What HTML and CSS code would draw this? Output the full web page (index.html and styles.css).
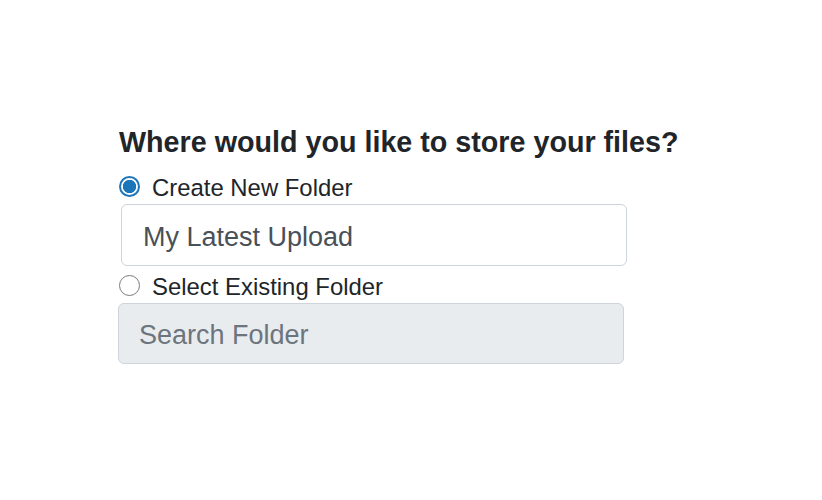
FILE: index.html
```html
<!DOCTYPE html>
<html lang="en">
<head>
<meta charset="utf-8">
<title>Store files</title>
<link rel="stylesheet" href="styles.css">
</head>
<body>
<form class="store-form">
  <h1 class="store-title">Where would you like to store your files?</h1>
  <label class="choice">
    <input type="radio" name="dest" class="radio" checked>
    <span class="choice-label">Create New Folder</span>
  </label>
  <input type="text" class="field field-new" value="My Latest Upload">
  <label class="choice">
    <input type="radio" name="dest" class="radio">
    <span class="choice-label">Select Existing Folder</span>
  </label>
  <input type="text" class="field field-search" placeholder="Search Folder" disabled>
</form>
</body>
</html>
```

FILE: styles.css
```css
html, body {
  margin: 0;
  padding: 0;
  background: #ffffff;
}

body {
  font-family: "Liberation Sans", Arial, sans-serif;
  color: #212529;
}

.store-form {
  display: flex;
  flex-direction: column;
  align-items: flex-start;
  width: 510px;
  margin: 0 0 0 118px;
  padding-top: 125px;
}

.store-title {
  margin: 0 0 0 1px;
  font-size: 28.7px;
  line-height: 34px;
  font-weight: 700;
  color: #212529;
  white-space: nowrap;
}

.choice {
  display: flex;
  align-items: center;
  height: 37px;
  gap: 12px;
  margin-top: 8px;
}

.field-new + .choice {
  margin-top: 0;
}

.radio {
  appearance: none;
  -webkit-appearance: none;
  margin: 1px 0 0 1px;
  width: 21px;
  height: 21px;
  border-radius: 50%;
  border: 1.5px solid #7a7a7a;
  background: #fff;
  box-sizing: border-box;
  flex: none;
}

.radio:checked {
  border: 2px solid #1b75bb;
  background: radial-gradient(circle, #1b75bb 0, #1b75bb 6.3px, #ffffff 7px);
}

.choice-label {
  font-size: 23.9px;
  line-height: 37px;
  padding-top: 4px;
  color: #212529;
}

.field {
  box-sizing: border-box;
  height: 62px;
  width: 506px;
  border: 1.5px solid #ced4da;
  border-radius: 6px;
  padding: 4px 20px 0;
  font-family: "Liberation Sans", Arial, sans-serif;
  font-size: 27px;
  color: #495057;
  background: #ffffff;
  outline: none;
}

.field-new {
  margin-left: 3px;
  padding-left: 21px;
}

.field-search {
  background: #e9ecef;
  height: 61px;
}

.field-search::placeholder {
  color: #6c757d;
  opacity: 1;
}
```
